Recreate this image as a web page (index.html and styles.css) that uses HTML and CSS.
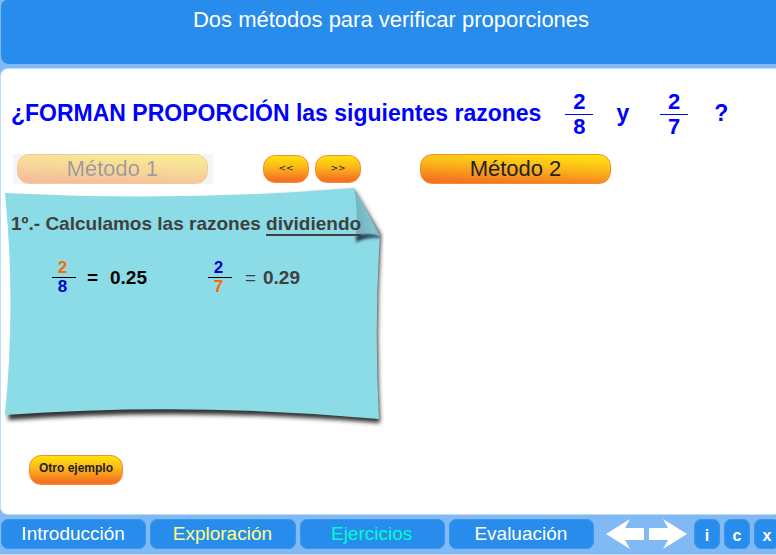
FILE: index.html
```html
<!DOCTYPE html>
<html lang="es">
<head>
<meta charset="utf-8">
<title>Dos métodos para verificar proporciones</title>
<link rel="stylesheet" href="styles.css">
</head>
<body>
<header class="header"><h1 class="title">Dos métodos para verificar proporciones</h1></header>
<main class="main">
  <h2 class="question">
    <span>¿FORMAN PROPORCIÓN las siguientes razones</span>
    <span class="fraction wide-gap"><span class="top">2</span><span>8</span></span>
    <span class="and">y</span>
    <span class="fraction"><span class="top">2</span><span>7</span></span>
    <span class="mark">?</span>
  </h2>
  <div class="controls">
    <div class="method-slot"><button class="pill method" type="button" disabled>Método 1</button></div>
    <div class="steps">
      <button class="pill step" type="button">&lt;&lt;</button>
      <button class="pill step" type="button">&gt;&gt;</button>
    </div>
    <button class="pill method" type="button">Método 2</button>
  </div>
  <section class="note">
    <svg class="paper" viewBox="0 0 384 244" aria-hidden="true">
      <defs>
        <filter id="soft" x="-5%" y="-5%" width="110%" height="115%"><feGaussianBlur stdDeviation="2"/></filter>
        <filter id="fine" x="-20%" y="-100%" width="140%" height="300%"><feGaussianBlur stdDeviation="1.5"/></filter>
        <linearGradient id="fold" x1="0" y1="0.6" x2="1" y2="0.3">
          <stop offset="0" stop-color="#73afba"/><stop offset="0.6" stop-color="#7fc4cf"/><stop offset="1" stop-color="#6aaab5"/>
        </linearGradient>
        <clipPath id="sheet"><path d="M5 9Q180 18 354 4L380 52Q374 140 379 235Q190 217 5 232Q16 120 5 9Z"/></clipPath>
      </defs>
      <path d="M12 30L355 7L381 51Q375 140 380 239Q190 223 8 236Q19 140 12 30Z" fill="#333" filter="url(#soft)"/>
      <path d="M5 9Q180 18 354 4L380 52Q374 140 379 235Q190 218 5 231Q16 120 5 9Z" fill="#8cdce7"/>
      <g clip-path="url(#sheet)"><path d="M357 52Q368 49 381 53Q366 52 357 57Z" fill="#234" stroke="#345" stroke-width="2" filter="url(#fine)"/></g>
      <path d="M354 4Q358 24 356 50Q369 46 380 52Z" fill="url(#fold)"/>
    </svg>
    <p class="step-title">1º.- Calculamos las razones <span class="underlined">dividiendo</span></p>
    <div class="ratios">
      <div class="ratio first">
        <span class="fraction small"><span class="top orange">2</span><span class="blue">8</span></span>
        <span class="equals">=</span><span>0.25</span>
      </div>
      <div class="ratio second">
        <span class="fraction small"><span class="top blue">2</span><span class="orange">7</span></span>
        <span class="equals">=</span><span>0.29</span>
      </div>
    </div>
  </section>
  <button class="pill another" type="button">Otro ejemplo</button>
</main>
<nav class="nav">
  <div class="tabs">
    <button class="tab" type="button">Introducción</button>
    <button class="tab explore" type="button">Exploración</button>
    <button class="tab exercise" type="button">Ejercicios</button>
    <button class="tab" type="button">Evaluación</button>
  </div>
  <div class="arrows">
    <button class="arrow" type="button" aria-label="Anterior"><svg viewBox="0 0 38 30"><path d="M0 15L24 0L19 9H38V21H19L24 30Z" fill="#fff"/></svg></button>
    <button class="arrow" type="button" aria-label="Siguiente"><svg viewBox="0 0 38 30"><path d="M38 15L14 0L19 9H0V21H19L14 30Z" fill="#fff"/></svg></button>
  </div>
  <div class="tools">
    <button class="tool" type="button">i</button>
    <button class="tool" type="button">c</button>
    <button class="tool" type="button">x</button>
  </div>
</nav>
</body>
</html>
```
FILE: styles.css
```css
* { box-sizing: border-box; }
body {
  margin: 0;
  min-height: 100vh;
  display: flex;
  flex-direction: column;
  overflow-x: hidden;
  background: #80b9f3;
  font-family: "Liberation Sans", Arial, sans-serif;
}
button { font-family: inherit; border: 0; padding: 0; margin: 0; white-space: nowrap; }
h1, h2, p { margin: 0; }
.header {
  height: 64px;
  margin-left: 1px;
  padding: 7px 0 0 5px;
  border-radius: 6px 0 0 8px;
  background: #278ceb;
  color: #fff;
  text-align: center;
}
.title { font-size: 22px; line-height: 26px; font-weight: 400; }
.main {
  flex: 1;
  margin-top: 4px;
  border: 1px solid #bddcff;
  border-right: 0;
  border-radius: 8px 0 0 8px;
  background: #fff;
}
.question {
  display: flex;
  align-items: flex-start;
  padding: 21px 0 0 10px;
  font-size: 23px;
  line-height: 46px;
  color: #00f;
  white-space: nowrap;
}
.fraction {
  display: inline-flex;
  flex-direction: column;
  width: 28px;
  margin-left: 18px;
  text-align: center;
  font-size: 22px;
  line-height: 24px;
}
.wide-gap { margin-left: 24px; }
.top { border-bottom: 1px solid; }
.and { padding: 0 13px 0 23px; }
.mark { padding-left: 26px; }
.controls { display: flex; padding: 15px 0 0 12px; }
.pill {
  height: 30px;
  border: 1px solid #f98a35;
  border-radius: 12px;
  background: linear-gradient(#ffe20b, #fbb51a 45%, #f47421 90%);
  color: #222;
}
.method { width: 191px; font-size: 22px; line-height: 28px; background: linear-gradient(183deg, #ffea0a, #fbb51a 45%, #f47421 90%); }
.method-slot { width: 200px; padding-left: 4px; background: #f5f5f5; }
.method:disabled { opacity: .42; color: #222; }
.steps { display: flex; gap: 6px; margin: 0 59px 0 50px; }
.step { width: 46px; height: 28px; margin-top: 1px; padding-bottom: 3px; font-family: "DejaVu Sans", sans-serif; font-size: 9px; }
.note { position: relative; width: 384px; height: 244px; color: #404040; font-weight: 700; }
.paper { position: absolute; top: 0; left: -1px; width: 384px; height: 244px; }
.step-title { position: relative; padding: 28px 0 0 10px; font-size: 19px; line-height: 24px; white-space: nowrap; }
.underlined { border-bottom: 2px solid #404040; }
.ratios { position: relative; display: flex; padding: 23px 0 0 51px; font-size: 19px; line-height: 24px; }
.ratio { display: flex; align-items: center; }
.first { width: 156px; color: #000; }
.small { width: 24px; margin: 0; padding-right: 3px; font-size: 17px; line-height: 18px; }
.small .top { margin-right: -3px; padding-right: 3px; border-color: #000; }
.equals { width: 34px; padding-left: 11px; }
.second .equals { width: 31px; padding-left: 13px; font-weight: 400; }
.orange { color: #f60; }
.blue { color: #00c; }
.another { width: 94px; margin: 27px 0 0 28px; padding-bottom: 4px; font-size: 12px; font-weight: 700; }
.nav { display: flex; height: 40px; padding: 4px 0 0 1px; border-bottom: 1px solid #bddcff; overflow: hidden; }
.tabs { display: flex; flex: 1; gap: 4px; }
.tab, .tool { height: 30px; border-radius: 8px; background: #278ceb; color: #fff; box-shadow: 0 0 0 1px #3a96ed inset; }
.tab { flex: 1; padding-right: 1px; font-size: 19px; }
.explore { color: #ff8; }
.exercise { color: #0fc; }
.arrows { display: flex; gap: 5px; margin: 0 7px 0 12px; }
.arrow { width: 38px; height: 30px; background: none; }
.arrow svg { display: block; width: 38px; height: 30px; }
.tools { display: flex; gap: 4px; margin-right: -4px; }
.tool { width: 26px; padding-top: 3px; font-size: 16px; font-weight: 700; }
```
